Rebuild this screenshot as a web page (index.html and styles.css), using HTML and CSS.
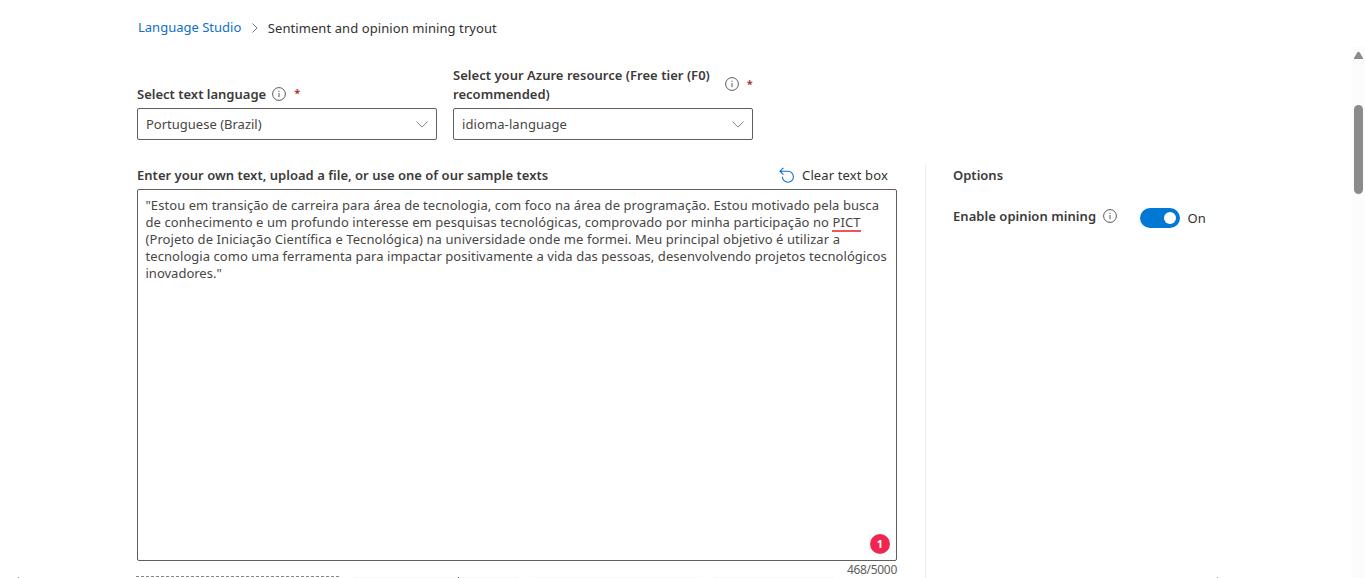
FILE: index.html
```html
<!DOCTYPE html>
<html lang="en">
<head>
<meta charset="utf-8">
<title>Language Studio</title>
<link rel="stylesheet" href="styles.css">
</head>
<body>
<svg class="defs" aria-hidden="true">
  <symbol id="info" viewBox="0 0 14 14"><circle cx="7" cy="7" r="6.4" fill="none" stroke="currentColor" stroke-width=".9"/><path d="M7 6v4.2M7 3.7v1.2" stroke="currentColor" stroke-width=".9"/></symbol>
  <symbol id="chevron" viewBox="0 0 12 7"><path d="M.5.6 6 6.1 11.5.6" fill="none" stroke="currentColor" stroke-width=".9"/></symbol>
</svg>
<nav class="breadcrumb">
  <a class="crumb-link">Language Studio</a>
  <svg class="crumb-sep" viewBox="0 0 6 10"><path d="M.5.5 5 5 .5 9.5" fill="none" stroke="currentColor"/></svg>
  <span class="crumb-now">Sentiment and opinion mining tryout</span>
</nav>
<section class="selectors">
  <div class="field">
    <div class="label"><span>Select text language</span><svg class="info"><use href="#info"/></svg><span class="req">*</span></div>
    <div class="select"><span>Portuguese (Brazil)</span><svg class="chev"><use href="#chevron"/></svg></div>
  </div>
  <div class="field">
    <div class="label"><span class="label-lines">Select your Azure resource (Free tier (F0)<br>recommended)</span><svg class="info info-far"><use href="#info"/></svg><span class="req">*</span></div>
    <div class="select"><span class="resource">idioma-language</span><svg class="chev"><use href="#chevron"/></svg></div>
  </div>
</section>
<main class="workspace">
  <section class="editor">
    <div class="editor-head">
      <span class="bold prompt">Enter your own text, upload a file, or use one of our sample texts</span>
      <span class="clear"><svg class="undo" viewBox="0 0 16 16"><path d="M4.4.8.9 4.2l3.5 3.5M1 4.2h7.9a5.5 5.5 0 1 1-5.5 5.6" fill="none" stroke="currentColor" stroke-width="1.1"/></svg><span>Clear text box</span></span>
    </div>
    <div class="textbox">
      <div class="line line-1">"Estou em transição de carreira para área de tecnologia, com foco na área de programação. Estou motivado pela busca</div>
      <div class="line line-2">de conhecimento e um profundo interesse em pesquisas tecnológicas, comprovado por minha participação no <span class="flagged">PICT</span></div>
      <div class="line line-3">(Projeto de Iniciação Científica e Tecnológica) na universidade onde me formei. Meu principal objetivo é utilizar a</div>
      <div class="line line-4">tecnologia como uma ferramenta para impactar positivamente a vida das pessoas, desenvolvendo projetos tecnológicos</div>
      <div class="line">inovadores."</div>
      <span class="badge">1</span>
    </div>
    <div class="below"><span class="dropzone"></span><span class="sample sample-icon"></span><span class="sample"></span><span class="sample sample-last"></span><span class="count">468/5000</span></div>
  </section>
  <aside class="options">
    <div class="bold">Options</div>
    <div class="option"><span class="bold option-name">Enable opinion mining</span><svg class="info"><use href="#info"/></svg><span class="toggle"><i></i></span><span class="state">On</span></div>
  </aside>
</main>
<div class="scrollbar"><span class="arrow"></span><span class="thumb"></span></div>
</body>
</html>
```
FILE: styles.css
```css
* { box-sizing: border-box; }
body { margin: 0; width: 1365px; height: 578px; overflow: hidden; position: relative; background: #fff; color: #323130; font: 13px/17px "Noto Sans", "Open Sans", sans-serif; white-space: nowrap; }
body::before, body::after { content: ""; position: absolute; top: 577px; left: 18px; width: 1px; height: 1px; background: #8a8886; }
body::after { left: 1217px; }
.defs { position: absolute; width: 0; height: 0; }
.breadcrumb { display: flex; align-items: center; height: 56px; padding-left: 138px; }
.crumb-link { color: #0f6fca; margin-bottom: 1px; }
.crumb-sep { width: 6px; height: 10px; margin: 0 9.5px 0 11px; color: #797775; }
.crumb-now { letter-spacing: .08px; }
.selectors { display: flex; gap: 16px; align-items: flex-end; height: 84px; padding-left: 137px; }
.field { width: 300px; }
.label { display: flex; align-items: center; font-weight: 600; color: #3b3a39; line-height: 19px; margin-bottom: 4px; }
.label-lines { letter-spacing: .03px; }
.info { width: 14px; height: 14px; margin: 0 0 1px 6px; flex: none; color: #484644; }
.info-far { margin: 0 0 3px 15px; }
.req { margin: 0 0 3px 8px; color: #a4262c; font-size: 11px; line-height: 14px; }
.select { display: flex; align-items: center; justify-content: space-between; height: 32px; padding: 0 8px; border: 1px solid #605e5c; border-radius: 2px; color: #484644; }
.resource { letter-spacing: .1px; }
.chev { width: 12px; height: 7px; color: #797775; }
.workspace { display: flex; padding: 25px 0 0 137px; }
.editor { width: 760px; }
.editor-head { display: flex; justify-content: space-between; height: 24px; padding-right: 9px; line-height: 21px; }
.bold { font-weight: 600; color: #3b3a39; }
.prompt { letter-spacing: .02px; }
.clear { display: flex; letter-spacing: .13px; }
.undo { width: 16px; height: 16px; margin: 2px 7px 0 0; color: #0f6fca; }
.textbox { position: relative; height: 372px; padding: 7px; border: 1px solid #605e5c; border-radius: 2px; color: #484644; }
.line { padding-left: .5px; }
.line-1 { letter-spacing: .07px; }
.line-2 { letter-spacing: .084px; }
.line-3 { letter-spacing: .08px; }
.line-4 { letter-spacing: .06px; }
.flagged { box-shadow: 0 1px #ee5757, inset 0 -1px #ee5757; }
.badge { position: absolute; right: 6px; bottom: 6px; width: 20px; height: 20px; border-radius: 50%; background: #f1264f; color: #fff; font: 700 11px/20px "Noto Sans", sans-serif; text-align: center; }
.below { display: flex; height: 17px; }
.dropzone { width: 203px; margin: 15px 0 0 -1px; border-top: 1px dashed #8a8886; }
.sample { width: 166px; height: 1px; margin: 16px 0 0 14px; background: #f8f8f8; }
.sample-icon { background: linear-gradient(90deg, #f8f8f8 105px, #605e5c 105px, #605e5c 106px, #f8f8f8 106px); }
.sample-last { width: 120px; }
.count { margin-left: auto; color: #605e5c; font-size: 12px; letter-spacing: -.3px; }
.options { margin-left: 28px; height: 420px; padding-left: 27px; border-left: 1px solid #edebe9; line-height: 21px; }
.option { display: flex; align-items: flex-start; margin-top: 20px; }
.option-name { letter-spacing: .05px; }
.option .info { margin: 3px 0 0 6.5px; }
.toggle { width: 40px; height: 20px; margin: 2px 8px 0 23px; border-radius: 10px; background: #0078d4; padding: 4px; }
.toggle i { display: block; width: 12px; height: 12px; margin-left: auto; border-radius: 50%; background: #fff; }
.state { margin-top: 2px; }
.scrollbar { position: absolute; left: 1351px; top: 47px; width: 14px; height: 531px; background: #fcfcfc; padding: 5px 3px; }
.arrow { display: block; width: 9px; height: 7px; background: #8b8b8b; clip-path: polygon(40% 0, 60% 0, 100% 85%, 100% 100%, 0 100%, 0 85%); }
.thumb { display: block; width: 9px; height: 89px; margin-top: 46px; border-radius: 5px; background: #8b8b8b; }
```
